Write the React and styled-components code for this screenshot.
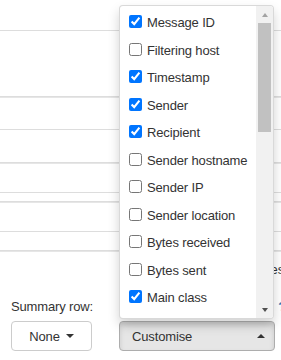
import React from "react";
import styled, { createGlobalStyle } from "styled-components";

const GlobalStyle = createGlobalStyle`
  html, body {
    margin: 0;
    padding: 0;
    background: #fff;
    overflow: hidden;
  }
  body {
    font-family: "Liberation Sans", Arial, sans-serif;
    font-size: 13px;
    letter-spacing: -0.15px;
    color: #333;
  }
`;

const rows = [
  { h: 30, line: 1 },
  { h: 65, line: 2 },
  { h: 31, line: 1 },
  { h: 32, line: 2 },
  { h: 28, line: 1 },
  { h: 8, line: 2 },
  { h: 28, line: 1 },
  { h: 18, line: 2 },
];

const columns = [
  { label: "Message ID", checked: true },
  { label: "Filtering host", checked: false },
  { label: "Timestamp", checked: true },
  { label: "Sender", checked: true },
  { label: "Recipient", checked: true },
  { label: "Sender hostname", checked: false },
  { label: "Sender IP", checked: false },
  { label: "Sender location", checked: false },
  { label: "Bytes received", checked: false },
  { label: "Bytes sent", checked: false },
  { label: "Main class", checked: true },
  { label: "Sub class", checked: false },
];

export default function App() {
  return (
    <Page>
      <GlobalStyle />
      <Table>
        {rows.map((r, i) => (
          <TableRow key={i} $h={r.h} $line={r.line} />
        ))}
      </Table>
      <Bottom>
        <OptionsRow>
          <OptionText>Stack series</OptionText>
        </OptionsRow>
        <LabelRow>
          <Label>Summary row:</Label>
          <Help>?</Help>
        </LabelRow>
        <ButtonRow>
          <NoneButton>
            None <Caret />
          </NoneButton>
          <Dropup>
            <Menu>
              <List>
                {columns.map((c) => (
                  <Item key={c.label}>
                    <Check type="checkbox" defaultChecked={c.checked} />
                    <span>{c.label}</span>
                  </Item>
                ))}
              </List>
              <Scrollbar>
                <ArrowBtn>
                  <Tri $up $color="#a3a3a3" />
                </ArrowBtn>
                <Track>
                  <Thumb />
                </Track>
                <ArrowBtn>
                  <Tri $color="#505050" />
                </ArrowBtn>
              </Scrollbar>
            </Menu>
            <CustomiseButton>
              <span>Customise</span>
              <Caret $up />
            </CustomiseButton>
          </Dropup>
        </ButtonRow>
      </Bottom>
    </Page>
  );
}

const Page = styled.div`
  width: 281px;
  height: 360px;
  display: flex;
  flex-direction: column;
`;

const Table = styled.div`
  display: flex;
  flex-direction: column;
`;

const TableRow = styled.div`
  height: ${(p) => p.$h}px;
  border-bottom: 1px solid #dddddd;
  ${(p) => (p.$line === 2 ? "box-shadow: 0 1px 0 #e6e6e6; margin-bottom: 1px;" : "")}
`;

const Bottom = styled.div`
  padding-left: 11px;
  display: flex;
  flex-direction: column;
`;

const OptionsRow = styled.div`
  margin-top: 8px;
  height: 20px;
  line-height: 20px;
  display: flex;
  justify-content: flex-end;
`;

const OptionText = styled.span`
  margin-right: -3px;
  white-space: nowrap;
`;

const LabelRow = styled.div`
  margin-top: 17px;
  height: 20px;
  line-height: 20px;
  display: flex;
  justify-content: space-between;
  align-items: center;
`;

const Label = styled.span`
  color: #333;
`;

const Help = styled.span`
  color: #337ab7;
  font-weight: bold;
  margin-right: -5px;
`;

const ButtonRow = styled.div`
  margin-top: 4px;
  display: flex;
  gap: 27px;
`;

const Caret = styled.span`
  display: inline-block;
  width: 0;
  height: 0;
  border-left: 4px solid transparent;
  border-right: 4px solid transparent;
  ${(p) =>
    p.$up
      ? "border-bottom: 4px solid #333;"
      : "border-top: 4px solid #333;"}
`;

const BaseButton = styled.button`
  height: 30px;
  box-sizing: border-box;
  font-family: "Liberation Sans", Arial, sans-serif;
  font-size: 13px;
  letter-spacing: -0.15px;
  color: #333;
  border-radius: 4px;
  display: flex;
  align-items: center;
  padding: 0;
  cursor: pointer;
`;

const NoneButton = styled(BaseButton)`
  width: 81px;
  background: #fff;
  border: 1px solid #ccc;
  justify-content: center;
  gap: 6px;
`;

const Dropup = styled.div`
  position: relative;
`;

const CustomiseButton = styled(BaseButton)`
  width: 156px;
  background: #e6e6e6;
  border: 1px solid #adadad;
  box-shadow: inset 0 3px 5px rgba(0, 0, 0, 0.125);
  justify-content: space-between;
  padding: 0 9px 0 12px;
`;

const Menu = styled.div`
  position: absolute;
  left: 0;
  bottom: calc(100% + 2px);
  width: 155px;
  height: 314px;
  box-sizing: border-box;
  background: #fff;
  border: 1px solid rgba(0, 0, 0, 0.15);
  border-radius: 4px;
  box-shadow: 0 6px 12px rgba(0, 0, 0, 0.175);
  display: flex;
  overflow: hidden;
  z-index: 10;
`;

const List = styled.div`
  flex: 1;
  padding-top: 3px;
  overflow: hidden;
`;

const Item = styled.label`
  height: 27.5px;
  display: flex;
  align-items: center;
  gap: 5px;
  padding-left: 9px;
  white-space: nowrap;
  color: #333;
`;

const Check = styled.input`
  width: 13px;
  height: 13px;
  margin: 0 0 2px 0;
  flex: none;
`;

const Scrollbar = styled.div`
  width: 17px;
  background: #f1f1f1;
  display: flex;
  flex-direction: column;
`;

const ArrowBtn = styled.div`
  height: 17px;
  display: flex;
  align-items: center;
  justify-content: center;
`;

const Tri = styled.span`
  width: 0;
  height: 0;
  border-left: 3.5px solid transparent;
  border-right: 3.5px solid transparent;
  ${(p) =>
    p.$up
      ? `border-bottom: 4px solid ${p.$color};`
      : `border-top: 4px solid ${p.$color};`}
`;

const Track = styled.div`
  flex: 1;
  padding: 0 2px;
`;

const Thumb = styled.div`
  height: 109px;
  background: #c1c1c1;
`;
